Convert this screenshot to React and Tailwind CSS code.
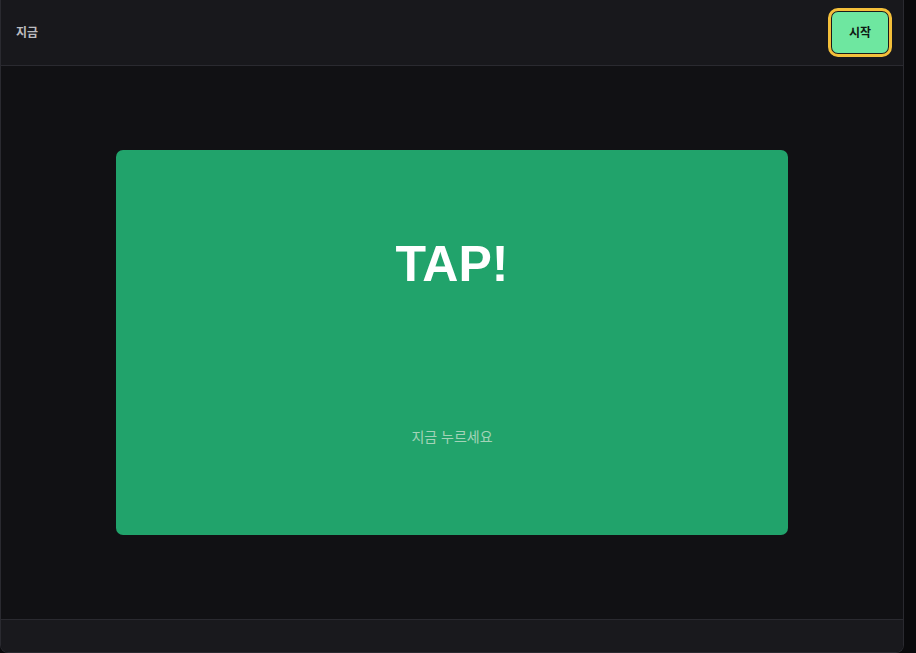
export default function App() {
  return (
    <div
      className="flex h-[653px] w-[916px] bg-[#0a0a0c]"
      style={{ fontFamily: '"Liberation Sans", "Noto Sans CJK KR", sans-serif' }}
    >
      <div className="flex h-[653px] w-[904px] flex-col overflow-hidden rounded-b-lg border border-t-0 border-[#2a2a30] bg-[#111114]">
        {/* header */}
        <header className="flex h-[66px] shrink-0 items-center justify-between border-b border-[#2a2a30] bg-[#18181c] pl-[15px] pr-[14px]">
          <span className="text-[12px] font-bold text-[#bcbcc0]">지금</span>
          <button className="flex h-[43px] w-[58px] items-center justify-center rounded-[7px] border border-[#1a1a1a] bg-[#6ee7a0] text-[12px] font-bold text-[#0f1a14] outline-[3px] outline-solid outline-[#f3bf3a]">
            시작
          </button>
        </header>

        {/* stage */}
        <main className="flex flex-1 items-center justify-center">
          <div className="flex h-[385px] w-[672px] flex-col items-center rounded-[7px] bg-[#21a36b] pt-[89px]">
            <div className="text-[50px] leading-none font-bold text-white">TAP!</div>
            <div className="mt-[138px] text-[14px] text-[#a3d3b8]">지금 누르세요</div>
          </div>
        </main>

        {/* footer */}
        <footer className="h-[33px] shrink-0 border-t border-[#2a2a30] bg-[#19191d]" />
      </div>
    </div>
  );
}
